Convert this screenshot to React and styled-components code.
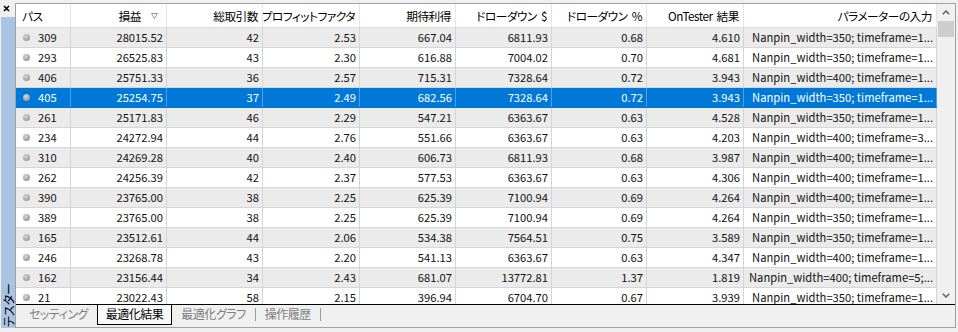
import React from 'react'
import styled, { createGlobalStyle } from 'styled-components'

const GlobalStyle = createGlobalStyle`
  html, body {
    margin: 0;
    background: #f0f0f0;
  }
  body {
    font-family: "Noto Sans CJK JP", "Noto Sans", sans-serif;
    font-size: 12px;
    font-feature-settings: "palt" 1;
    color: #000;
  }
`

const columns = [
  { label: 'パス', width: 55, align: 'left' },
  { label: '損益', width: 96, sort: true },
  { label: '総取引数', width: 96 },
  { label: 'プロフィットファクタ', width: 97 },
  { label: '期待利得', width: 96 },
  { label: 'ドローダウン $', width: 96 },
  { label: 'ドローダウン %', width: 95 },
  { label: 'OnTester 結果', width: 97 },
  { label: 'パラメーターの入力', width: 193 },
]

const p350 = 'Nanpin_width=350; timeframe=1...'
const p400 = 'Nanpin_width=400; timeframe=1...'

const rows = [
  ['309', '28015.52', '42', '2.53', '667.04', '6811.93', '0.68', '4.610', p350],
  ['293', '26525.83', '43', '2.30', '616.88', '7004.02', '0.70', '4.681', p350],
  ['406', '25751.33', '36', '2.57', '715.31', '7328.64', '0.72', '3.943', p400],
  ['405', '25254.75', '37', '2.49', '682.56', '7328.64', '0.72', '3.943', p350],
  ['261', '25171.83', '46', '2.29', '547.21', '6363.67', '0.63', '4.528', p350],
  ['234', '24272.94', '44', '2.76', '551.66', '6363.67', '0.63', '4.203', 'Nanpin_width=400; timeframe=3...'],
  ['310', '24269.28', '40', '2.40', '606.73', '6811.93', '0.68', '3.987', p400],
  ['262', '24256.39', '42', '2.37', '577.53', '6363.67', '0.63', '4.306', p400],
  ['390', '23765.00', '38', '2.25', '625.39', '7100.94', '0.69', '4.264', p400],
  ['389', '23765.00', '38', '2.25', '625.39', '7100.94', '0.69', '4.264', p350],
  ['165', '23512.61', '44', '2.06', '534.38', '7564.51', '0.75', '3.589', p350],
  ['246', '23268.78', '43', '2.20', '541.13', '6363.67', '0.63', '4.347', p400],
  ['162', '23156.44', '34', '2.43', '681.07', '13772.81', '1.37', '1.819', 'Nanpin_width=400; timeframe=5;...'],
  ['21', '23022.43', '58', '2.15', '396.94', '6704.70', '0.67', '3.939', p350],
]

const SELECTED = 3

const Frame = styled.div`
  display: flex;
  width: 958px;
  height: 332px;
  overflow: hidden;
`

const SideStrip = styled.div`
  width: 15px;
  display: flex;
  flex-direction: column;
  flex-shrink: 0;
`

const CloseBox = styled.div`
  height: 17px;
  padding: 5px 0 0 3px;
  box-sizing: border-box;
  svg { display: block; }
`

const SideBar = styled.div`
  flex: 1;
  margin: 0 0 4px 1px;
  background: #a9c3e2;
  display: flex;
  flex-direction: column;
  justify-content: flex-end;
  align-items: center;
`

const SideLabel = styled.span`
  writing-mode: vertical-rl;
  text-orientation: sideways;
  transform: rotate(180deg);
  line-height: 13px;
  font-size: 12px;
  padding-top: 1px;
`

const Panel = styled.div`
  flex: 1;
  margin: 3px 2px 4px 0;
  border: 1px solid #a0a0a0;
  display: flex;
  flex-direction: column;
`

const GridArea = styled.div`
  display: flex;
  height: 300px;
`

const Grid = styled.div`
  width: 921px;
  overflow: hidden;
  background: #fff;
`

const HeaderRow = styled.div`
  display: flex;
  height: 24px;
  box-sizing: border-box;
  border-bottom: 1px solid #dcdcdc;
  background: #fff;
`

const HeaderCell = styled.div`
  width: ${p => p.$w}px;
  flex-shrink: 0;
  box-sizing: border-box;
  border-right: 1px solid #e5e5e5;
  padding: ${p => (p.$align === 'left' ? '0 4px 0 6px' : p.$sort ? '0 8px 0 4px' : '0 4px 0 2px')};
  font-size: 11.7px;
  line-height: 23px;
  letter-spacing: -0.5px;
  word-spacing: 2px;
  display: flex;
  align-items: center;
  justify-content: ${p => (p.$align === 'left' ? 'flex-start' : 'flex-end')};
  gap: 10px;
  white-space: nowrap;
  overflow: hidden;
`

const Row = styled.div`
  display: flex;
  height: 20px;
  box-sizing: border-box;
  border-bottom: 1px solid ${p => (p.$selected ? '#0078d7' : '#d5d5d5')};
  background: ${p => (p.$selected ? '#0078d7' : p.$odd ? '#ebebeb' : '#fff')};
  color: ${p => (p.$selected ? '#fff' : '#111')};
`

const Cell = styled.div`
  width: ${p => p.$w}px;
  flex-shrink: 0;
  box-sizing: border-box;
  border-right: 1px solid ${p => (p.$selected ? 'rgba(255,255,255,0.3)' : '#d5d5d5')};
  padding: 0 3px;
  font-size: 11.2px;
  line-height: 19px;
  text-align: ${p => (p.$align === 'left' ? 'left' : 'right')};
  white-space: nowrap;
  overflow: hidden;
  display: ${p => (p.$align === 'left' ? 'flex' : 'block')};
  align-items: center;
`

const PassDot = styled.span`
  width: 7px;
  height: 7px;
  border-radius: 50%;
  margin: 0 8px 0 4px;
  flex-shrink: 0;
  background: radial-gradient(circle at 40% 35%, #d8d8d8 0%, #a8a8a8 55%, #8c8c8c 100%);
`

const Scrollbar = styled.div`
  width: 18px;
  flex-shrink: 0;
  background: #f0f0f0;
  display: flex;
  flex-direction: column;
`

const ScrollButton = styled.div`
  height: 17px;
  display: flex;
  align-items: center;
  justify-content: center;
  svg { display: block; }
`

const Thumb = styled.div`
  height: 16px;
  margin: 0 1px;
  background: #cdcdcd;
`

const Track = styled.div`
  flex: 1;
`

const TabBar = styled.div`
  border-top: 1px solid #000;
  height: 22px;
  display: flex;
  align-items: flex-start;
  padding-left: 4px;
  background: #f0f0f0;
`

const Tab = styled.div`
  height: 20px;
  box-sizing: border-box;
  padding: 0 ${p => (p.$active ? 8 : 9)}px;
  font-size: 12px;
  letter-spacing: -0.5px;
  line-height: 18px;
  white-space: nowrap;
  color: ${p => (p.$active ? '#000' : '#7d7d7d')};
  background: ${p => (p.$active ? '#f9f9f9' : 'transparent')};
  border: ${p => (p.$active ? '1px solid #000' : 'none')};
  border-top: none;
`

const TabSep = styled.span`
  width: 1px;
  height: 13px;
  margin-top: 3px;
  background: #9a9a9a;
`

const SortMark = () => (
  <svg width="7" height="6" viewBox="0 0 7 6">
    <path d="M0.5 0.5 L6.5 0.5 L3.5 5.5 Z" fill="none" stroke="#8a8a8a" strokeWidth="0.9" />
  </svg>
)

const Chevron = ({ down }) => (
  <svg width="8" height="5" viewBox="0 0 8 5">
    <path
      d={down ? 'M0.8 0.8 L4 4 L7.2 0.8' : 'M0.8 4.2 L4 1 L7.2 4.2'}
      fill="none"
      stroke="#606060"
      strokeWidth="1.5"
    />
  </svg>
)

const App = () => {
  return (
    <>
      <GlobalStyle />
      <Frame>
        <SideStrip>
          <CloseBox>
            <svg width="7" height="7" viewBox="0 0 7 7">
              <path d="M1 1 L6 6 M6 1 L1 6" stroke="#000" strokeWidth="1.6" />
            </svg>
          </CloseBox>
          <SideBar>
            <SideLabel>テスター</SideLabel>
          </SideBar>
        </SideStrip>

        <Panel>
          <GridArea>
            <Grid>
              <HeaderRow>
                {columns.map(c => (
                  <HeaderCell key={c.label} $w={c.width} $align={c.align} $sort={c.sort}>
                    <span>{c.label}</span>
                    {c.sort && <SortMark />}
                  </HeaderCell>
                ))}
              </HeaderRow>
              {rows.map((r, i) => (
                <Row key={r[0]} $odd={i % 2 === 0} $selected={i === SELECTED}>
                  {r.map((v, j) => (
                    <Cell key={j} $w={columns[j].width} $align={columns[j].align} $selected={i === SELECTED}>
                      {j === 0 && <PassDot />}
                      {v}
                    </Cell>
                  ))}
                </Row>
              ))}
            </Grid>
            <Scrollbar>
              <ScrollButton><Chevron /></ScrollButton>
              <Thumb />
              <Track />
              <ScrollButton><Chevron down /></ScrollButton>
            </Scrollbar>
          </GridArea>

          <TabBar>
            <Tab>セッティング</Tab>
            <Tab $active>最適化結果</Tab>
            <Tab>最適化グラフ</Tab>
            <TabSep />
            <Tab>操作履歴</Tab>
            <TabSep />
          </TabBar>
        </Panel>
      </Frame>
    </>
  )
}

export default App
